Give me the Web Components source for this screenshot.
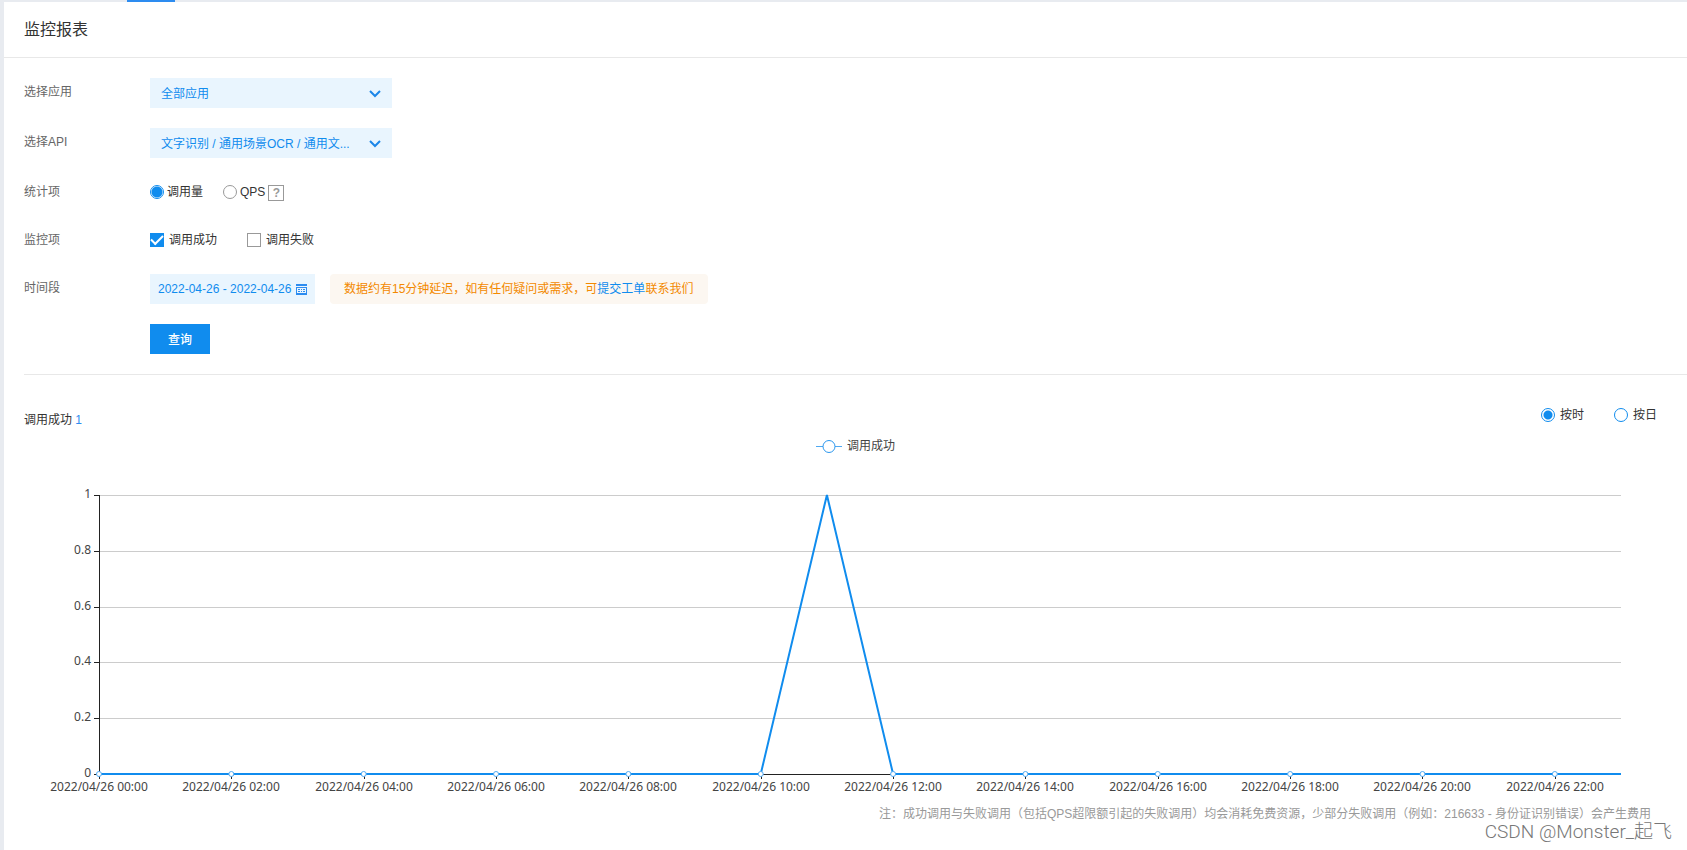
<!DOCTYPE html>
<html lang="zh-CN">
<head>
<meta charset="utf-8">
<title>监控报表</title>
<style>
  html, body { margin: 0; }
  body {
    background: #e8ebf0;
    color: #333;
    font: 12px/20px "Liberation Sans", "Noto Sans CJK SC", sans-serif;
  }
</style>
</head>
<body>
<monitor-page></monitor-page>

<script>
const RADIO_CSS = `
  * { box-sizing: border-box; }
  input, select, button { margin: 0; font: inherit; color: inherit; }
  input[type=radio] {
    appearance: none; flex: none; width: 14px; height: 14px;
    border: 1px solid var(--ring, #999); border-radius: 50%; background: #fff;
  }
  input[type=radio]:checked {
    border-color: #108cee;
    background: radial-gradient(circle, #108cee var(--dot, 5px), #fff calc(var(--dot, 5px) + 1px));
  }
  .choice { display: flex; align-items: center; }
`;

class BaseElement extends HTMLElement {
  constructor() {
    super();
    this.attachShadow({ mode: 'open' }).innerHTML = this.constructor.markup;
  }
}

class FieldRow extends BaseElement {
  static markup = `
    <style>
      :host { display: flex; min-height: 28px; }
      .label { flex: none; width: 126px; line-height: 28px; color: #666; }
      .control { display: flex; align-items: center; flex: 1; min-width: 0; }
    </style>
    <div class="label"><slot name="label"></slot></div>
    <div class="control"><slot></slot></div>`;
}

class DropDown extends BaseElement {
  static markup = `
    <style>
      :host { display: grid; width: 242px; height: 30px; background: #e9f5fe; color: #108cee; align-items: center; }
      ::slotted(select), svg { grid-area: 1 / 1; }
      svg { justify-self: end; margin: 2px 11px 0 0; pointer-events: none; }
    </style>
    <slot></slot>
    <svg width="12" height="8" viewBox="0 0 12 8" fill="none" stroke="#1c86e8" stroke-width="2"><path d="M1 1l5 5 5-5"/></svg>`;
}

class FilterPanel extends BaseElement {
  static markup = `
    <style>
      ${RADIO_CSS}
      :host { display: block; }
      form { display: grid; gap: 20px; padding: 20px 0; border-bottom: 1px solid #e8e8e8; }
      select {
        appearance: none; width: 100%; height: 30px; padding: 2px 30px 0 11px;
        border: 0; border-radius: 0; background: transparent; outline: 0;
      }
      .choice { gap: 3px; margin-right: 20px; }
      .choice.qps { margin-right: 3px; }
      .choice.check { gap: 5px; margin-right: 30px; }
      input[type=checkbox] {
        appearance: none; display: grid; place-items: center; flex: none;
        width: 14px; height: 14px; border: 1px solid #999; background: #fff;
      }
      input[type=checkbox]:checked { border-color: #108cee; background: #108cee; }
      input[type=checkbox]:checked::before {
        content: ""; width: 10px; height: 5px; margin-bottom: 3px;
        border: solid #fff; border-width: 0 0 2px 2px; transform: rotate(-45deg);
      }
      .help {
        width: 16px; height: 16px; padding: 0; border: 1px solid #999; background: #fff;
        color: #999; font-weight: 700; line-height: 14px; margin-top: 2px;
      }
      .date { display: flex; align-items: center; width: 165px; height: 30px; padding: 0 8px; gap: 4px; background: #e9f5fe; color: #108cee; }
      .date input { width: 134px; padding: 0; border: 0; background: transparent; outline: 0; }
      .tip { margin-left: 15px; padding: 5px 15px 5px 14px; border-radius: 4px; background: #fcf7f1; color: #f38900; }
      .tip a { color: #108cee; text-decoration: none; }
      .submit { width: 60px; height: 30px; padding: 2px 0 0; border: 0; background: #108cee; color: #fff; font-weight: 500; }
    </style>
    <form onsubmit="return false">
      <field-row>
        <label slot="label" for="app">选择应用</label>
        <drop-down><select id="app"><option>全部应用</option></select></drop-down>
      </field-row>
      <field-row>
        <label slot="label" for="api">选择API</label>
        <drop-down><select id="api"><option>文字识别 / 通用场景OCR / 通用文...</option></select></drop-down>
      </field-row>
      <field-row>
        <span slot="label">统计项</span>
        <label class="choice"><input type="radio" name="stat" checked>调用量</label>
        <label class="choice qps"><input type="radio" name="stat">QPS</label>
        <button class="help" type="button">?</button>
      </field-row>
      <field-row>
        <span slot="label">监控项</span>
        <label class="choice check"><input type="checkbox" checked>调用成功</label>
        <label class="choice check"><input type="checkbox">调用失败</label>
      </field-row>
      <field-row>
        <label slot="label" for="range">时间段</label>
        <div class="date">
          <input id="range" type="text" readonly value="2022-04-26 - 2022-04-26">
          <svg width="11" height="11" viewBox="0 0 11 11"><path fill="#2c8cf0" d="M0 0h11v2H0zM0 3h11v8H0z"/><path fill="#e9f5fe" d="M1 4h9v5H1z"/><path fill="#2c8cf0" d="M2 5h2v1H2zM5 5h1v1H5zM7 5h2v1H7zM2 7h2v1H2zM5 7h1v1H5zM7 7h2v1H7z"/></svg>
        </div>
        <div class="tip">数据约有15分钟延迟，如有任何疑问或需求，可<a href="#ticket">提交工单</a>联系我们</div>
      </field-row>
      <field-row><button class="submit" type="submit">查询</button></field-row>
    </form>`;
}

class LineChart extends BaseElement {
  static markup = `
    <style>
      :host { display: block; height: 366px; }
      svg { display: block; width: 100%; height: 100%; font: 12px "Noto Sans", "Noto Sans CJK SC", sans-serif; }
      text { fill: #444; }
      .grid { stroke: #ccc; shape-rendering: crispEdges; }
      .axis { stroke: #222; fill: none; shape-rendering: crispEdges; }
      .line { stroke: #108cee; stroke-width: 2; fill: none; stroke-linejoin: bevel; }
      .dot { stroke: #4fa9f2; fill: #fff; }
    </style>
    <svg role="img" aria-label="调用成功"></svg>`;

  connectedCallback() {
    this.draw();
    new ResizeObserver(() => this.draw()).observe(this);
  }

  draw() {
    const values = Array.from({ length: 24 }, (_, hour) => (hour === 11 ? 1 : 0));
    const width = this.clientWidth;
    const left = 95, right = width - 66, top = 60, bottom = 339;
    const x = i => left + (right - left) * i / (values.length - 1);
    const y = v => bottom - (bottom - top) * v;
    const crisp = n => Math.round(n) + 0.5;
    const middle = Math.round((width - 44) / 2);
    let out = '';
    for (const v of [0, 0.2, 0.4, 0.6, 0.8, 1]) {
      const py = crisp(y(v));
      if (v) out += `<path class="grid" d="M${left} ${py}H${right}"/>`;
      out += `<path class="axis" d="M${left - 5} ${py}h5"/><text x="${left - 8}" y="${Math.round(y(v)) + 3}" text-anchor="end">${v}</text>`;
    }
    out += `<path class="axis" d="M${crisp(left)} ${top}V${bottom + 0.5}H${right}"/>`;
    for (let i = 0; i < values.length; i += 2) {
      out += `<path class="axis" d="M${crisp(x(i))} ${bottom}v5"/><text x="${Math.round(x(i))}" y="${bottom + 17}" text-anchor="middle">2022/04/26 ${String(i).padStart(2, '0')}:00</text>`;
    }
    out += `<path class="line" d="M${values.map((v, i) => x(i) + ' ' + y(v)).join('L')}"/>`;
    for (let i = 0; i < values.length; i += 2) {
      out += `<circle class="dot" cx="${x(i)}" cy="${y(values[i])}" r="2.5"/>`;
    }
    out += `<path class="dot" d="M${middle - 8} 11.5h26"/><circle cx="${middle + 5}" cy="11.5" r="6" fill="#fff" stroke="#2b97ee"/><text x="${middle + 23}" y="15">调用成功</text>`;
    this.shadowRoot.querySelector('svg').innerHTML = out;
  }
}

class ChartHeader extends BaseElement {
  static markup = `
    <style>
      ${RADIO_CSS}
      :host { display: flex; justify-content: space-between; align-items: flex-start; padding: 30px 30px 0 0; --ring: #108cee; --dot: 4px; }
      .total { line-height: 30px; }
      .total b { font-weight: 400; color: #2d8cf0; }
      .modes { display: flex; gap: 30px; }
      .choice { gap: 5px; }
    </style>
    <div class="total">调用成功 <b>1</b></div>
    <div class="modes">
      <label class="choice"><input type="radio" name="mode" checked>按时</label>
      <label class="choice"><input type="radio" name="mode">按日</label>
    </div>`;
}

class MonitorPage extends BaseElement {
  static markup = `
    <style>
      * { box-sizing: border-box; }
      :host { display: flex; flex-direction: column; min-height: 100vh; position: relative; }
      .tabs { height: 2px; padding-left: 127px; }
      .tabs i { display: block; width: 48px; height: 2px; background: #2d8cf0; }
      main { flex: 1; margin-left: 4px; background: #fff; }
      h1 { margin: 0; padding-left: 20px; border-bottom: 1px solid #e8e8e8; font-size: 16px; font-weight: 400; line-height: 55px; }
      .inset { padding-left: 20px; }
      .note { margin: 0; padding-right: 36px; line-height: 26px; text-align: right; color: #999; }
      .mark { position: absolute; right: 15px; bottom: 5px; font: 300 19px/26px Roboto, "Noto Sans CJK SC", sans-serif; color: #777; }
    </style>
    <div class="tabs"><i></i></div>
    <main>
      <h1>监控报表</h1>
      <div class="inset">
        <filter-panel></filter-panel>
        <chart-header></chart-header>
      </div>
      <line-chart></line-chart>
      <p class="note">注：成功调用与失败调用（包括QPS超限额引起的失败调用）均会消耗免费资源，少部分失败调用（例如：216633 - 身份证识别错误）会产生费用</p>
    </main>
    <div class="mark">CSDN @Monster_起飞</div>`;
}

customElements.define('field-row', FieldRow);
customElements.define('drop-down', DropDown);
customElements.define('filter-panel', FilterPanel);
customElements.define('line-chart', LineChart);
customElements.define('chart-header', ChartHeader);
customElements.define('monitor-page', MonitorPage);
</script>
</body>
</html>
